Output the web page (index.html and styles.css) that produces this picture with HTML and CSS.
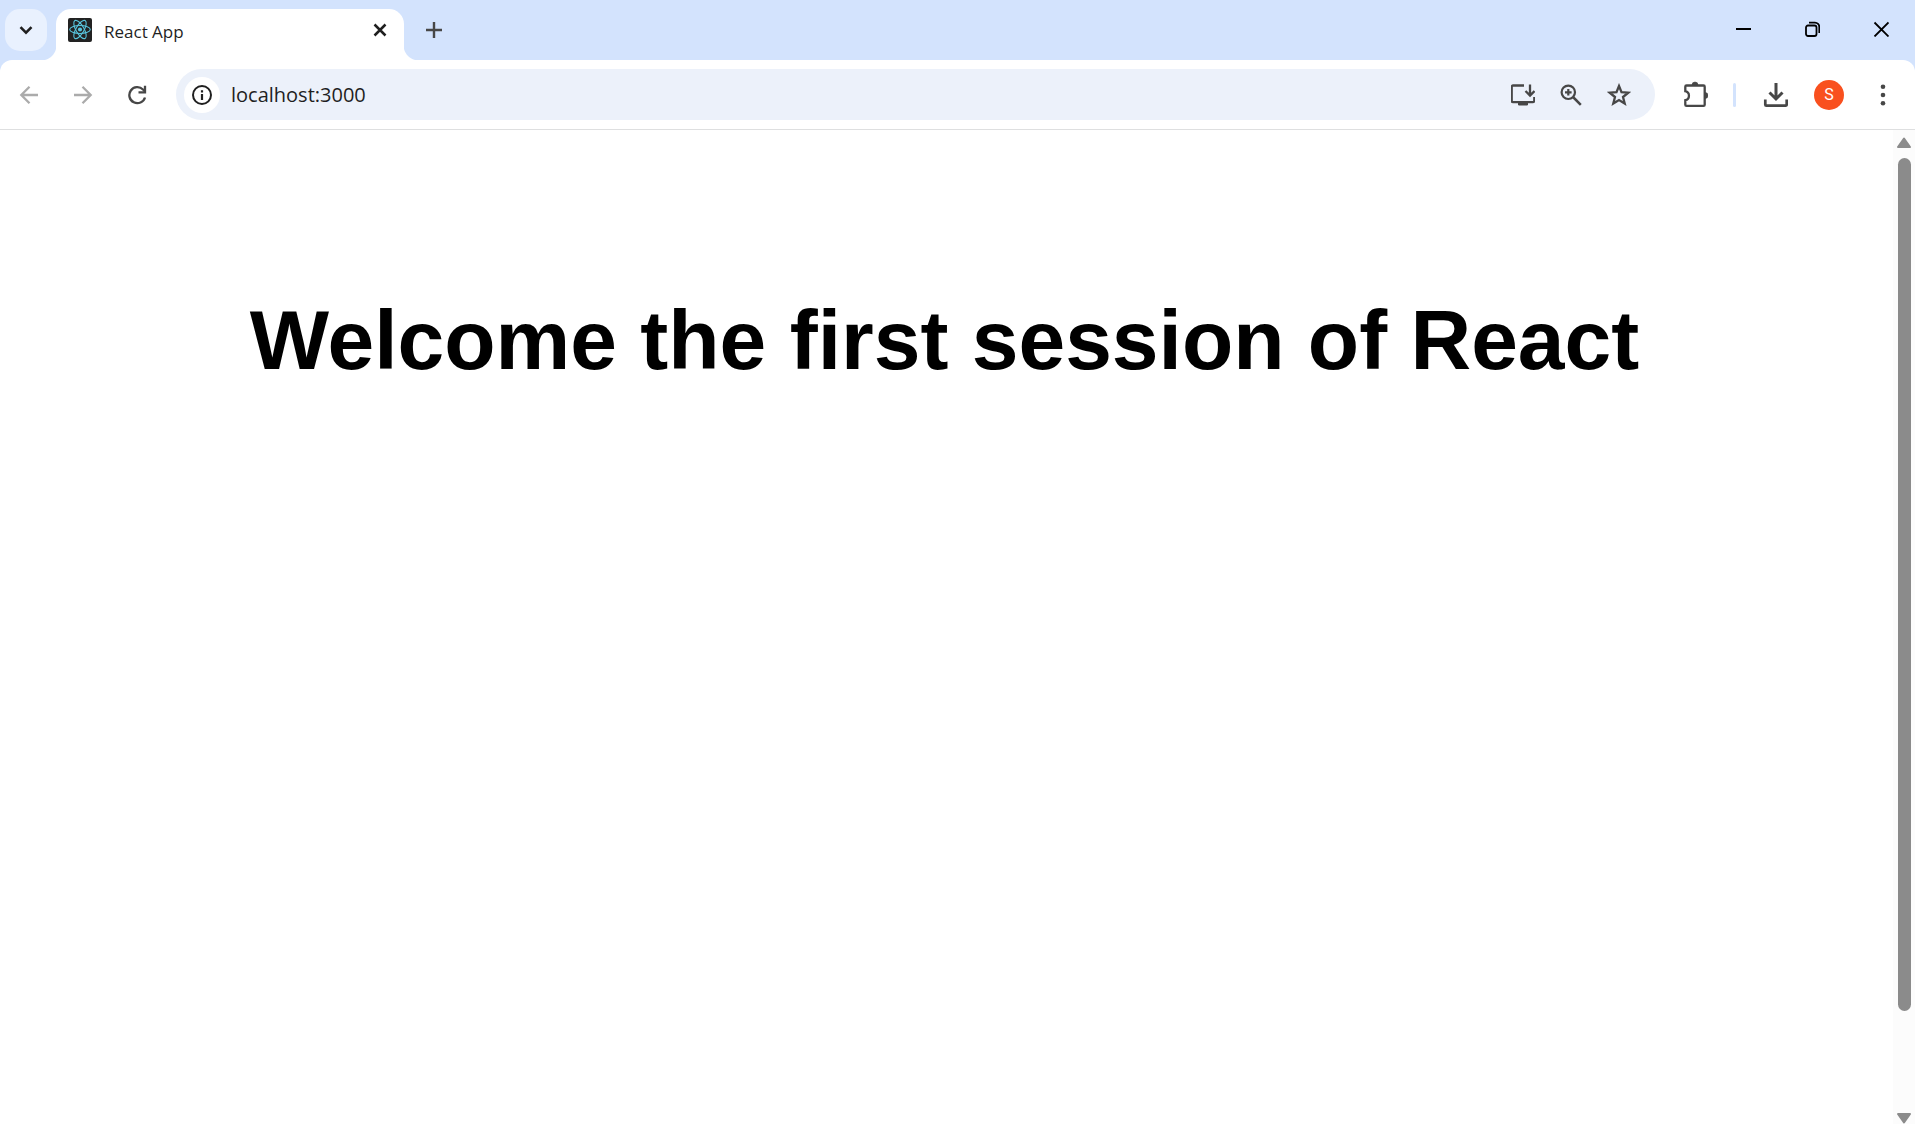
FILE: index.html
```html
<!DOCTYPE html>
<html lang="en">
<head>
<meta charset="utf-8">
<title>React App</title>
<link rel="stylesheet" href="styles.css">
</head>
<body>
<div class="browser">
  <header class="tab-strip">
    <button class="tab-search" aria-label="Search tabs">
      <svg width="16" height="16" viewBox="0 0 16 16"><path d="M2.500 5.200 8 10.700l5.500-5.500" stroke-width="2.600"/></svg>
    </button>
    <div class="tab">
      <svg class="favicon" width="24" height="24" viewBox="0 0 24 24">
        <rect width="24" height="24" rx="2" fill="#222222" stroke="none"/>
        <g stroke="#58c4dc" stroke-width="1.100">
          <ellipse cx="12" cy="11.500" rx="10.300" ry="4"/>
          <ellipse cx="12" cy="11.500" rx="10.300" ry="4" transform="rotate(60 12 11.500)"/>
          <ellipse cx="12" cy="11.500" rx="10.300" ry="4" transform="rotate(120 12 11.500)"/>
        </g>
        <circle cx="12" cy="11.500" r="2.100" fill="#58c4dc" stroke="none"/>
      </svg>
      <span class="tab-title">React App</span>
      <button class="tab-close" aria-label="Close tab">
        <svg width="14" height="14" viewBox="0 0 14 14"><path d="m1.500 1.500 11 11M12.500 1.500l-11 11" stroke-width="2.500"/></svg>
      </button>
    </div>
    <button class="new-tab" aria-label="New tab">
      <svg width="16" height="16" viewBox="0 0 16 16"><path d="M8 0v16M0 8h16" stroke-width="2.400"/></svg>
    </button>
    <div class="window-controls">
      <button aria-label="Minimize"><svg width="16" height="16" viewBox="0 0 16 16"><path d="M1 8h15" stroke-width="2"/></svg></button>
      <button aria-label="Restore"><svg width="16" height="16" viewBox="0 0 16 16"><rect x="2" y="4.500" width="10.500" height="10.500" rx="2" stroke-width="1.800"/><path d="M5 1.700h6a4.300 4.300 0 0 1 4.300 4.300v6" stroke-width="1.800"/></svg></button>
      <button aria-label="Close"><svg width="16" height="16" viewBox="0 0 16 16"><path d="m1.500 1.500 14 14M15.500 1.500l-14 14" stroke-width="1.800"/></svg></button>
    </div>
  </header>

  <nav class="toolbar">
    <div class="history">
      <button class="disabled" aria-label="Back"><svg width="20" height="20" viewBox="0 0 20 20"><path d="M19 10H2.500M10.500 1.800 2.300 10l8.200 8.200" stroke-width="2.300"/></svg></button>
      <button class="disabled" aria-label="Forward"><svg width="20" height="20" viewBox="0 0 20 20"><path d="M1 10h16.500M9.500 1.800l8.200 8.200-8.200 8.200" stroke-width="2.300"/></svg></button>
      <button aria-label="Reload"><svg width="20" height="20" viewBox="0 0 20 20"><path d="M18 12.500a8 8 0 1 1-2-8L18 6.500" stroke-width="2.300"/><path d="M18 .8v6.500h-6.500" stroke-width="2.300"/></svg></button>
    </div>
    <form class="omnibox">
      <button type="button" class="site-info" aria-label="View site information">
        <svg width="20" height="20" viewBox="0 0 20 20"><circle cx="10" cy="10" r="9" stroke-width="2"/><path d="M10 9v6M10 5.200v2.200" stroke-width="2.200"/></svg>
      </button>
      <input class="address" type="text" value="localhost:3000" aria-label="Address and search bar">
      <button type="button" aria-label="Install app">
        <svg width="24" height="24" viewBox="0 0 24 24"><path d="M13.500 2.500H2.500a1.300 1.300 0 0 0-1.300 1.300v14a1.300 1.300 0 0 0 1.300 1.300h20a1.300 1.300 0 0 0 1.300-1.300V14" transform="translate(-.5 0)" stroke-width="2.300"/><path d="M19 1.500V12M14.500 8l4.500 4.500L23.500 8" stroke-width="2.300"/><path d="M7.500 20h9v2h-9z" fill="currentColor" stroke-width="1"/></svg>
      </button>
      <button type="button" aria-label="Zoom">
        <svg width="22" height="22" viewBox="0 0 22 22"><circle cx="8.300" cy="8.300" r="6.700" stroke-width="2.200"/><path d="m13 13 7.800 7.800" stroke-width="2.500"/><path d="M8.300 5v6.600M5 8.300h6.600" stroke-width="2.200"/></svg>
      </button>
      <button type="button" aria-label="Bookmark this tab">
        <svg width="24" height="24" viewBox="0 0 24 24"><path d="m12 3 2.500 6.200 6.700.5-5.200 4.300 1.700 6.500-5.700-3.500-5.700 3.500L8 14 2.800 9.700l6.700-.5z" stroke-width="2.300"/></svg>
      </button>
    </form>
    <button aria-label="Extensions">
      <svg width="28" height="28" viewBox="0 0 28 28"><path d="M6.500 4.500h17a1.200 1.200 0 0 1 1.200 1.200v18a1.200 1.200 0 0 1-1.200 1.200h-17a1.200 1.200 0 0 1-1.200-1.200v-4.500a4.600 4.600 0 0 0 0-9V5.700a1.200 1.200 0 0 1 1.200-1.200z" stroke-width="2.300"/><path d="M12 4a3 3 0 0 1 6 0zM25 11.500a3 3 0 0 1 0 6z" fill="currentColor" stroke-width=".6"/></svg>
    </button>
    <span class="divider"></span>
    <button aria-label="Downloads">
      <svg width="26" height="26" viewBox="0 0 26 26"><path d="M14 1v16M7.500 10.500 14 17l6.500-6.500" stroke-width="3"/><path d="M3.300 17.500v5.200a1 1 0 0 0 1 1h19.400a1 1 0 0 0 1-1v-5.200" stroke-width="2.700"/></svg>
    </button>
    <button class="avatar" aria-label="Profile S">S</button>
    <button aria-label="Menu">
      <svg width="6" height="22" viewBox="0 0 6 22"><g fill="currentColor" stroke="none"><circle cx="3" cy="2.700" r="2.300"/><circle cx="3" cy="11" r="2.300"/><circle cx="3" cy="19.300" r="2.300"/></g></svg>
    </button>
  </nav>

  <div class="viewport">
    <main class="page">
      <h1>Welcome the first session of React</h1>
    </main>
    <div class="scrollbar" aria-hidden="true">
      <svg width="16" height="12" viewBox="0 0 16 12"><path d="M8 1.500 14 10H2z"/></svg>
      <div class="track"><div class="thumb"></div></div>
      <svg width="16" height="12" viewBox="0 0 16 12"><path d="M8 10.500 2 2h12z"/></svg>
    </div>
  </div>
</div>
</body>
</html>
```
FILE: styles.css
```css
* {
  box-sizing: border-box;
}

body {
  margin: 0;
  background: #fff;
  color: #1f1f1f;
  font-family: "Open Sans", "Noto Sans", sans-serif;
}

button {
  display: flex;
  align-items: center;
  justify-content: center;
  flex: none;
  width: 40px;
  height: 40px;
  padding: 0;
  border: 0;
  background: none;
  color: #474747;
  font: inherit;
}

svg {
  display: block;
  flex: none;
  fill: none;
  stroke: currentColor;
}

.browser {
  display: flex;
  flex-direction: column;
  min-height: 100vh;
  background: #d3e3fd;
}

/* Tab strip */
.tab-strip {
  display: flex;
  align-items: flex-start;
  gap: 9px;
  height: 60px;
  padding: 9px 0 0 5px;
}

.tab-search,
.new-tab {
  width: 42px;
  height: 42px;
  border-radius: 15px;
}

.tab-search {
  background: #e9f1fe;
  color: #1f1f1f;
}

.tab {
  position: relative;
  display: flex;
  align-items: center;
  width: 348px;
  height: 51px;
  padding: 0 9px 9px 12px;
  border-radius: 15px 15px 0 0;
  background: #fff;
}

.tab::before,
.tab::after {
  content: "";
  position: absolute;
  bottom: 0;
  width: 15px;
  height: 15px;
}

.tab::before {
  right: 100%;
  background: radial-gradient(circle at 0 0, transparent 15px, #fff 16px);
}

.tab::after {
  left: 100%;
  background: radial-gradient(circle at 100% 0, transparent 15px, #fff 16px);
}

.tab-title {
  flex: 1;
  padding: 3px 0 0 12px;
  font-size: 17px;
  line-height: 24px;
}

.tab-close {
  width: 30px;
  height: 30px;
  color: #1f1f1f;
}

.window-controls {
  display: flex;
  margin-left: auto;
}

.window-controls button {
  width: 69px;
  color: #000;
}

/* Toolbar */
.toolbar {
  display: flex;
  align-items: center;
  gap: 19px;
  height: 70px;
  padding: 0 12px 0 9px;
  border-bottom: 1px solid #dedfe0;
  border-radius: 12px 12px 0 0;
  background: #fff;
}

.history {
  display: flex;
  gap: 14px;
}

.disabled {
  color: #ababab;
}

.omnibox {
  display: flex;
  flex: 1;
  align-items: center;
  gap: 8px;
  height: 51px;
  padding: 0 16px 0 8px;
  border-radius: 26px;
  background: #ecf1fa;
}

.site-info {
  width: 36px;
  height: 36px;
  border-radius: 50%;
  background: #fff;
  color: #1f1f1f;
}

.address {
  flex: 1;
  min-width: 0;
  padding: 0 0 0 3px;
  border: 0;
  outline: 0;
  background: none;
  color: #1f1f1f;
  font: 20px/28px "Open Sans", "Noto Sans", sans-serif;
}

.divider {
  width: 3px;
  height: 24px;
  border-radius: 2px;
  background: #d3e3fd;
}

.avatar {
  width: 30px;
  height: 30px;
  border-radius: 50%;
  background: #f9501e;
  color: #fff;
  font: 16px/30px Roboto, sans-serif;
}

/* Page area */
.viewport {
  display: flex;
  flex: 1;
  background: linear-gradient(#dedfe0, #dedfe0) top / 100% 0 no-repeat #fff;
}

.page {
  flex: 1;
  padding: 162px 4px 0 0;
}

.page h1 {
  margin: 0;
  color: #000;
  font: bold 84px/96px "Liberation Sans", Arial, sans-serif;
  text-align: center;
}

.scrollbar {
  display: flex;
  flex-direction: column;
  align-items: center;
  gap: 9px;
  width: 22px;
  padding: 7px 0 0;
  background: #fcfcfc;
}

.scrollbar svg {
  fill: #8b8b8b;
  stroke: #8b8b8b;
  stroke-width: 2;
  stroke-linejoin: round;
}

.track {
  display: flex;
  flex: 1;
  flex-direction: column;
  width: 13px;
  padding-bottom: 92px;
}

.thumb {
  flex: 1;
  border-radius: 7px;
  background: #8b8b8b;
}
```
